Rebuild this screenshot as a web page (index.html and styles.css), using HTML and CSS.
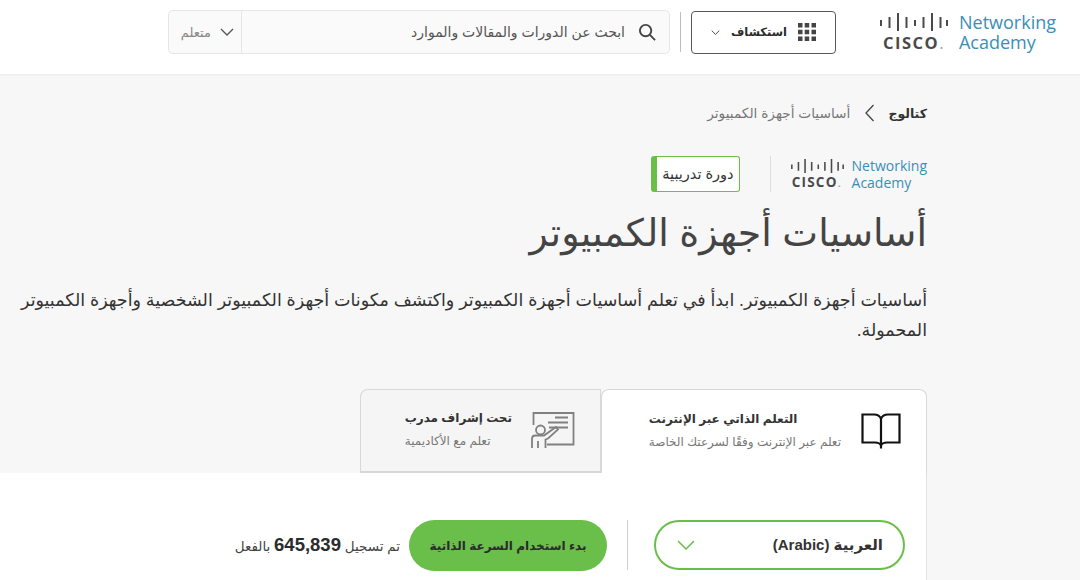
FILE: index.html
```html
<!DOCTYPE html>
<html lang="ar" dir="rtl">
<head>
<meta charset="utf-8">
<title>أساسيات أجهزة الكمبيوتر</title>
<link rel="stylesheet" href="styles.css">
</head>
<body>
<header class="topbar">
  <div class="logo logo-large" dir="ltr">
    <div class="logo-cisco">
      <svg class="logo-bars" viewBox="0 0 68 18" aria-hidden="true"><path d="M1 7v6M9.500 4v11M18 0v18M26.500 4v11M35 7v6M43.500 4v11M52 0v18M60.500 4v11M67 7v6"/></svg>
      <span class="logo-word">CISCO<span class="logo-dot">.</span></span>
    </div>
    <div class="logo-academy">Networking<br>Academy</div>
  </div>
  <button class="explore">
    <svg class="grid-icon" viewBox="0 0 18 18" aria-hidden="true"><path d="M0 0h4.500v4.500H0zM6.700 0h4.500v4.500H6.700zM13.500 0H18v4.500h-4.500zM0 6.700h4.500v4.500H0zM6.700 6.700h4.500v4.500H6.700zM13.500 6.700H18v4.500h-4.500zM0 13.500h4.500V18H0zM6.700 13.500h4.500V18H6.700zM13.500 13.500H18V18h-4.500z"/></svg>
    <span>استكشاف</span>
    <svg class="chev-small" viewBox="0 0 12 7" aria-hidden="true"><path d="M1 1l5 5 5-5"/></svg>
  </button>
  <span class="top-divider"></span>
  <div class="search">
    <div class="search-field">
      <svg class="search-icon" viewBox="0 0 20 20" aria-hidden="true"><circle cx="8" cy="8" r="6"/><path d="M12.500 12.500L18 18"/></svg>
      <span>ابحث عن الدورات والمقالات والموارد</span>
    </div>
    <div class="search-scope">
      <svg class="chev-scope" viewBox="0 0 14 8" aria-hidden="true"><path d="M1 1l6 6 6-6"/></svg>
      <span>متعلم</span>
    </div>
  </div>
</header>
<main class="page">
  <section class="hero">
    <nav class="crumbs">
      <strong>كتالوج</strong>
      <svg class="crumb-sep" viewBox="0 0 10 18" aria-hidden="true"><path d="M9 1L1.500 9 9 17"/></svg>
      <span>أساسيات أجهزة الكمبيوتر</span>
    </nav>
    <div class="badges">
      <div class="logo logo-small" dir="ltr">
        <div class="logo-cisco">
          <svg class="logo-bars" viewBox="0 0 68 18" aria-hidden="true"><path d="M1 7v6M9.500 4v11M18 0v18M26.500 4v11M35 7v6M43.500 4v11M52 0v18M60.500 4v11M67 7v6"/></svg>
          <span class="logo-word">CISCO<span class="logo-dot">.</span></span>
        </div>
        <div class="logo-academy">Networking<br>Academy</div>
      </div>
      <span class="badge-divider"></span>
      <span class="course-tag">دورة تدريبية</span>
    </div>
    <h1>أساسيات أجهزة الكمبيوتر</h1>
    <p class="lead">أساسيات أجهزة الكمبيوتر. ابدأ في تعلم أساسيات أجهزة الكمبيوتر واكتشف مكونات أجهزة الكمبيوتر الشخصية وأجهزة الكمبيوتر المحمولة.</p>
  </section>
  <div class="tabs">
    <div class="tab tab-active">
      <svg class="book-icon" viewBox="0 0 40 36" aria-hidden="true"><path d="M1.500 1.500H13c3.500 0 6 1.500 7 4.500 1-3 3.500-4.500 7-4.500h11.500v28H26c-3 0-5 .8-6 3-1-2.200-3-3-6-3H1.500zM20 6v29.500"/></svg>
      <div class="tab-text">
        <strong>التعلم الذاتي عبر الإنترنت</strong>
        <span>تعلم عبر الإنترنت وفقًا لسرعتك الخاصة</span>
      </div>
    </div>
    <div class="tab">
      <svg class="teach-icon" viewBox="0 0 44 36" aria-hidden="true"><path d="M2.500 13V1h40v31.500H16M24 5.500h13M17 10.500h20M18 15.500h19"/><circle cx="9.500" cy="18" r="4.500"/><path d="M1 36V27c0-2 1.500-3.500 3.500-3.500H13L25 15l2 2.500-10 9-2.500 1V36M7 29v7"/></svg>
      <div class="tab-text">
        <strong>تحت إشراف مدرب</strong>
        <span>تعلم مع الأكاديمية</span>
      </div>
    </div>
  </div>
  <section class="panel">
    <button class="lang">
      <span>العربية (Arabic)</span>
      <svg class="chev-lang" viewBox="0 0 18 10" aria-hidden="true"><path d="M1 1l8 8 8-8"/></svg>
    </button>
    <span class="panel-divider"></span>
    <button class="start">بدء استخدام السرعة الذاتية</button>
    <p class="enrolled">تم تسجيل <b>645,839</b> بالفعل</p>
  </section>
</main>
</body>
</html>
```
FILE: styles.css
```css
* { box-sizing: border-box; }
html, body { margin: 0; height: 100%; overflow: hidden; }
body { background: #fff; color: #2b2b2b; font-family: "Liberation Sans", "DejaVu Sans", sans-serif; }
button { font: inherit; color: inherit; background: none; cursor: pointer; }

.topbar { height: 76px; display: flex; align-items: center; padding: 0 24px 10px 0; background: #fff; border-bottom: 2px solid #f0f0f0; }
.logo { display: flex; align-items: center; }
.logo-cisco { display: flex; flex-direction: column; align-items: center; }
.logo-bars { display: block; fill: none; stroke: #4a4a4c; }
.logo-word { font-family: "Open Sans", sans-serif; font-weight: 700; color: #4a4a4c; line-height: 1; }
.logo-dot { color: #a0a0a0; font-weight: 400; }
.logo-academy { font-family: "Open Sans", sans-serif; color: #3a8fb7; }
.logo-large .logo-bars { width: 68px; height: 18px; stroke-width: 2; margin-bottom: 4px; }
.logo-large .logo-word { font-size: 16.500px; letter-spacing: 1.500px; }
.logo-large .logo-academy { font-size: 18px; line-height: 20px; margin-left: 11px; }
.logo-small .logo-bars { width: 55px; height: 14px; stroke-width: 2; margin-bottom: 3px; }
.logo-small .logo-word { font-size: 13.500px; letter-spacing: 1.200px; }
.logo-small .logo-academy { font-size: 14px; line-height: 17px; margin-left: 7px; }

.explore { width: 145px; height: 43px; margin-right: 44px; display: flex; align-items: center; gap: 11px; padding: 0 19px; border: 1px solid #58585b; border-radius: 4px; font-size: 11.500px; font-weight: 700; }
.grid-icon { width: 18px; height: 18px; fill: #444; flex: none; }
.chev-small { width: 11px; height: 7px; margin-right: auto; fill: none; stroke: #444; stroke-width: 1.300; }
.top-divider { width: 1px; height: 40px; margin-right: 10px; background: #bdbdbd; }
.search { width: 502px; height: 44px; margin-right: 10px; display: flex; background: #fafafa; border: 1px solid #e6e6e6; border-radius: 5px; color: #555; font-size: 14px; }
.search-field { flex: 1; display: flex; align-items: center; gap: 13px; padding: 0 12px; }
.search-icon { width: 19px; height: 19px; fill: none; stroke: #444; stroke-width: 2; flex: none; }
.search-scope { width: 73px; display: flex; align-items: center; gap: 9px; padding-right: 7px; border-right: 1px solid #e6e6e6; color: #888; font-size: 13px; }
.chev-scope { width: 14px; height: 8px; fill: none; stroke: #555; stroke-width: 1.300; }

.page { height: 504px; background: #f7f7f7; }
.hero { padding: 27px 153px 0 0; }
.crumbs { display: flex; align-items: center; height: 20px; font-size: 13.700px; color: #777; }
.crumbs strong { color: #333; font-size: 12.500px; }
.crumb-sep { width: 11px; height: 18px; margin: 0 13px 0 14px; fill: none; stroke: #444; stroke-width: 1.300; }
.badges { display: flex; align-items: center; margin-top: 33px; }
.badge-divider { width: 1px; height: 36px; margin: 0 19px 0 30px; background: #ddd; }
.course-tag { height: 36px; padding: 0 5px; display: flex; align-items: center; background: #fff; border: 1px solid #6abf4b; border-left: 6px solid #6abf4b; border-radius: 3px; font-size: 14.500px; color: #333; }
h1 { margin: 15px 0 0; font-size: 38px; line-height: 52px; font-weight: 400; color: #444; }
.lead { margin: 26px 0 0; font-size: 17.500px; line-height: 30px; color: #333; }

.tabs { display: flex; margin-top: 44px; padding-right: 153px; }
.tab { height: 84px; width: 241px; display: flex; align-items: center; gap: 19px; padding: 0 25px 2px 0; border: 1px solid #d8d8d8; border-bottom: 2px solid #d8d8d8; border-radius: 8px 0 0 0; background: #f5f5f5; color: #555; }
.tab-active { width: 326px; background: #fff; border-radius: 8px 8px 0 0; border-bottom: 0; gap: 20px; }
.tab-text { display: flex; flex-direction: column; align-items: flex-end; gap: 9px; font-size: 12px; color: #777; }
.tab-text strong { font-size: 12px; color: #333; }
.book-icon { width: 40px; height: 36px; fill: none; stroke: #111; stroke-width: 2.200; flex: none; }
.teach-icon { width: 44px; height: 36px; fill: none; stroke: #808080; stroke-width: 1.800; flex: none; }

.panel { width: 927px; height: 107px; margin-right: 153px; display: flex; align-items: flex-start; padding: 47px 21px 0 0; background: #fff; border-right: 1px solid #e2e2e2; }
.lang { width: 251px; height: 50px; display: flex; align-items: center; justify-content: space-between; padding: 0 20px 0 21px; border: 2px solid #6abf4b; border-radius: 25px; font-size: 15px; font-weight: 700; color: #333; background: #fff; }
.chev-lang { width: 18px; height: 10px; fill: none; stroke: #6abf4b; stroke-width: 1.500; }
.panel-divider { width: 1px; height: 50px; margin: 0 26px 0 20px; background: #cfcfcf; }
.start { width: 198px; height: 51px; border: 0; border-radius: 26px; background: #6abf4b; font-size: 12px; font-weight: 700; color: #2b2b2b; }
.enrolled { margin: 14px 9px 0 0; font-size: 13.500px; color: #444; }
.enrolled b { font-size: 18.500px; color: #2b2b2b; }
```
